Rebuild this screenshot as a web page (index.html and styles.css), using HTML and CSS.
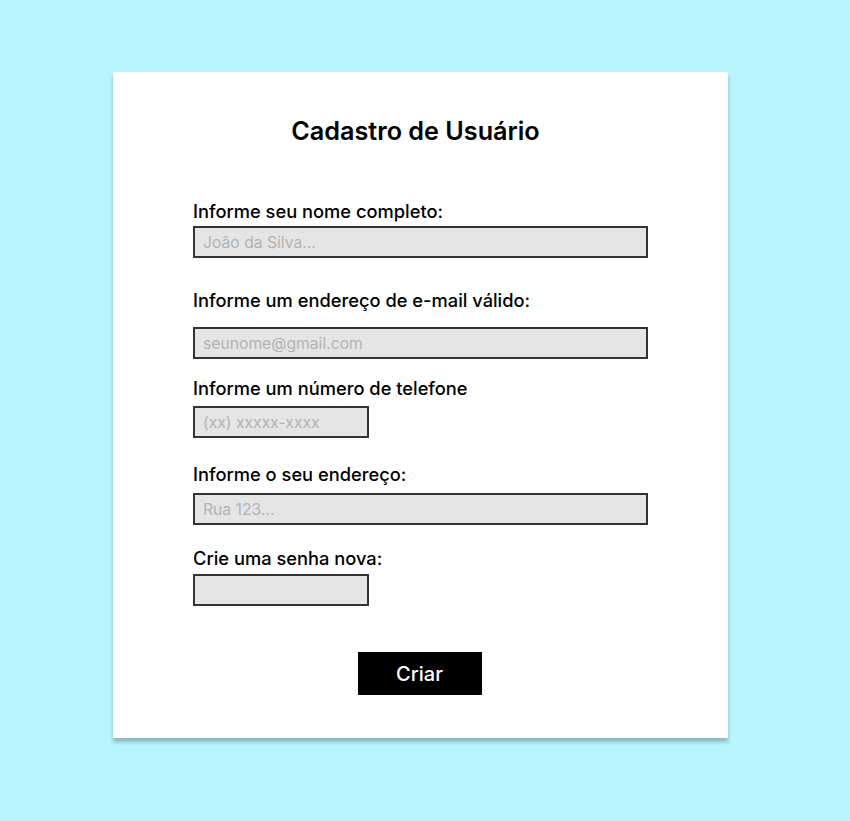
FILE: index.html
```html
<!DOCTYPE html>
<html lang="pt-BR">
<head>
<meta charset="utf-8">
<title>Cadastro de Usuário</title>
<link rel="stylesheet" href="styles.css">
</head>
<body>
<main class="card">
  <h1 class="title">Cadastro de Usuário</h1>
  <form class="form">
    <label class="label l1" for="nome">Informe seu nome completo:</label>
    <input class="input wide g5" id="nome" type="text" placeholder="João da Silva...">

    <label class="label l2" for="email">Informe um endereço de e-mail válido:</label>
    <input class="input wide g17" id="email" type="email" placeholder="seunome@gmail.com">

    <label class="label l3" for="tel">Informe um número de telefone</label>
    <input class="input narrow g8" id="tel" type="tel" placeholder="(xx) xxxxx-xxxx">

    <label class="label l4" for="end">Informe o seu endereço:</label>
    <input class="input wide g9" id="end" type="text" placeholder="Rua 123...">

    <label class="label l5" for="senha">Crie uma senha nova:</label>
    <input class="input narrow g6" id="senha" type="password">

    <div class="actions">
      <button class="btn" type="button">Criar</button>
    </div>
  </form>
</main>
</body>
</html>
```
FILE: styles.css
```css
* { box-sizing: border-box; }
html, body { margin: 0; padding: 0; }
body {
  background: #b8f5fe;
  font-family: "Inter", "Noto Sans", sans-serif;
  color: #000;
  height: 821px;
  overflow: hidden;
  padding-top: 72px;
}
.card {
  width: 615px;
  height: 666px;
  margin-left: 113px;
  background: #fff;
  box-shadow: 0 4px 4px rgba(0, 0, 0, 0.25);
  padding: 44px 80px 0;
}
.title {
  margin: 0;
  font-size: 25.2px;
  line-height: 30px;
  font-weight: 600;
  text-align: center;
  padding-right: 10px;
}
.form { display: flex; flex-direction: column; align-items: flex-start; }
.label {
  display: block;
  font-size: 18.3px;
  line-height: 20px;
  font-weight: 500;
}
.l1 { margin-top: 55px; }
.l2 { margin-top: 32px; }
.l3 { margin-top: 19px; }
.l4 { margin-top: 26px; }
.l5 { margin-top: 23px; }
.input {
  height: 32px;
  border: 2px solid #333;
  background: #e5e5e5;
  font-family: inherit;
  font-size: 15.7px;
  padding: 1px 8px 0;
  outline: none;
  border-radius: 0;
}
.input::placeholder { color: #b3b3b3; }
.wide { width: 455px; }
.narrow { width: 176px; }
.g5 { margin-top: 5px; }
.g17 { margin-top: 17px; }
.g8 { margin-top: 8px; }
.g9 { margin-top: 9px; }
.g6 { margin-top: 6px; }
.actions {
  align-self: stretch;
  display: flex;
  justify-content: center;
  margin-top: 46px;
  padding-right: 2px;
}
.btn {
  width: 124px;
  height: 43px;
  background: #000;
  color: #fff;
  border: 0;
  font-family: inherit;
  font-size: 20px;
  font-weight: 500;
  cursor: pointer;
}
```
